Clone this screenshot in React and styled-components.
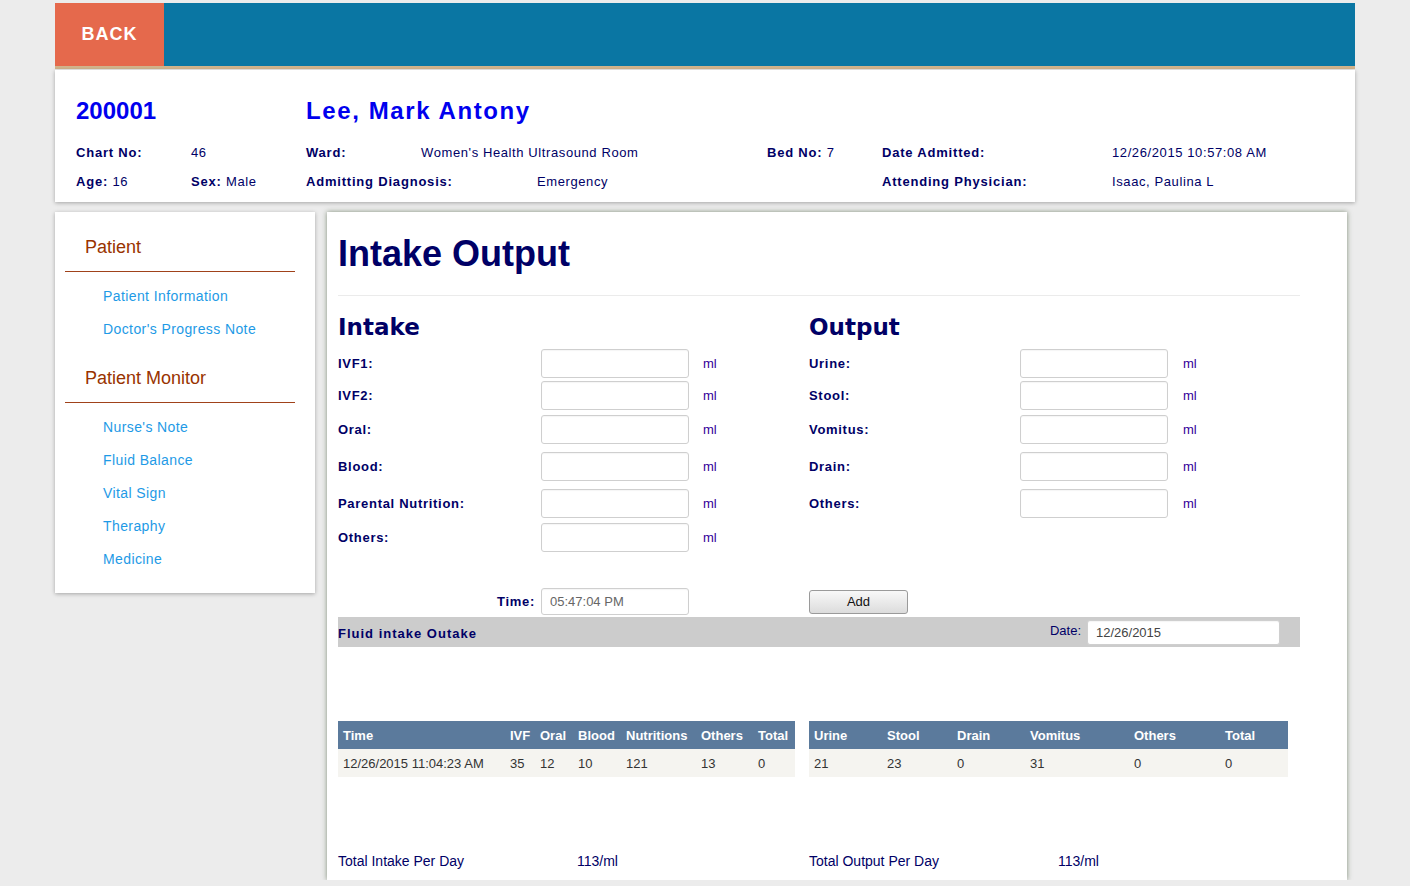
import React from "react";
import styled, { createGlobalStyle } from "styled-components";

const GlobalStyle = createGlobalStyle`
  body {
    margin: 0;
    background: #ececec;
    font-family: "Liberation Sans", Arial, sans-serif;
    font-size: 13px;
    color: #000066;
  }
`;

const Page = styled.div`
  width: 1300px;
  margin: 0 auto;
  padding-top: 3px;
`;

const TopBar = styled.div`
  display: flex;
  height: 63px;
  background: #0a76a3;
  border-bottom: 3px solid #d2b48c;
`;

const BackButton = styled.div`
  width: 109px;
  display: flex;
  align-items: center;
  justify-content: center;
  background: #e5694c;
  color: #fff;
  font-weight: bold;
  font-size: 18px;
  letter-spacing: 1px;
  cursor: pointer;
`;

const InfoCard = styled.div`
  margin-top: 1px;
  height: 132px;
  box-sizing: border-box;
  padding: 27px 0 0 21px;
  background: #fff;
  box-shadow: 0 1px 4px rgba(0, 0, 0, 0.3);
  display: grid;
  grid-template-columns: 115px 115px 115px 116px 230px 115px 230px 1fr;
  grid-template-rows: 41px 29px 29px;
  align-items: center;
`;

const PatientId = styled.div`
  grid-column: ${p => p.$col};
  align-self: start;
  font-size: 24px;
  line-height: 28px;
  font-weight: bold;
  color: #0000ee;
  letter-spacing: ${p => p.$spacing || 0}px;
`;

const InfoLabel = styled.div`
  grid-column: ${p => p.$col};
  font-weight: bold;
  letter-spacing: 0.8px;
  white-space: nowrap;
`;

const InfoValue = styled.span`
  font-weight: normal;
  letter-spacing: 0.6px;
`;

const InfoText = styled.div`
  grid-column: ${p => p.$col};
  letter-spacing: 0.6px;
  white-space: nowrap;
`;

const Body = styled.div`
  display: flex;
  align-items: flex-start;
  gap: 12px;
  margin-top: 10px;
`;

const Sidebar = styled.div`
  width: 260px;
  box-sizing: border-box;
  padding: 24px 20px 24px 10px;
  background: #fff;
  box-shadow: 0 1px 4px rgba(0, 0, 0, 0.3);
`;

const SideHeading = styled.div`
  font-size: 18px;
  line-height: 22px;
  color: #993300;
  padding-left: 20px;
  margin-top: ${p => (p.$first ? 0 : 28)}px;
`;

const SideDivider = styled.div`
  height: 1px;
  background: #a0421a;
  margin: 13px 0 14px;
`;

const SideLink = styled.a`
  display: block;
  padding-left: 38px;
  font-size: 14px;
  line-height: 20px;
  letter-spacing: 0.4px;
  color: #1e9ae6;
  text-decoration: none;
  & + & {
    margin-top: 13px;
  }
`;

const Main = styled.div`
  width: 1020px;
  box-sizing: border-box;
  padding: 22px 47px 10px 11px;
  background: #fff;
  box-shadow: 0 0 5px rgba(70, 90, 60, 0.65);
`;

const Title = styled.h1`
  margin: 0;
  font-size: 36px;
  line-height: 40px;
  font-weight: bold;
  color: #000066;
`;

const Rule = styled.div`
  height: 1px;
  background: #ebebeb;
  margin-top: 21px;
`;

const TwoCols = styled.div`
  display: grid;
  grid-template-columns: 471px 1fr;
  margin-top: ${p => p.$top || 0}px;
`;

const SectionHeading = styled.h2`
  margin: 17px 0 6px;
  font-family: "DejaVu Sans", Verdana, sans-serif;
  font-size: 23px;
  line-height: 28px;
  font-weight: bold;
  color: #000066;
`;

const FieldRow = styled.div`
  display: flex;
  align-items: center;
  height: ${p => p.$h}px;
`;

const FieldLabel = styled.label`
  width: ${p => p.$w}px;
  flex-shrink: 0;
  font-weight: bold;
  letter-spacing: 0.7px;
  color: #000066;
  text-align: ${p => p.$align || "left"};
  padding-right: ${p => p.$pr || 0}px;
  box-sizing: border-box;
`;

const TextBox = styled.input`
  width: ${p => p.$w || 148}px;
  height: ${p => p.$h || 29}px;
  box-sizing: border-box;
  border: 1px solid #cfcfcf;
  border-radius: 3px;
  background: #fff;
  box-shadow: inset 0 1px 1px rgba(0, 0, 0, 0.04);
  padding: 0 8px;
  font-family: inherit;
  font-size: 13px;
  color: ${p => p.$color || "#666"};
  outline: none;
`;

const Unit = styled.span`
  margin-left: ${p => p.$ml}px;
  color: #330099;
`;

const AddButton = styled.button`
  width: 99px;
  height: 24px;
  border: 1px solid #9a9a9a;
  border-radius: 3px;
  background: linear-gradient(#f8f8f8, #dcdcdc);
  font-family: inherit;
  font-size: 13px;
  color: #111;
  cursor: pointer;
`;

const GrayBar = styled.div`
  display: flex;
  align-items: center;
  height: 30px;
  margin-top: 1px;
  padding-right: 20px;
  background: #cccccc;
`;

const BarTitle = styled.div`
  flex: 1;
  font-weight: bold;
  letter-spacing: 1px;
  color: #000066;
  padding-top: 3px;
`;

const DateLabel = styled.span`
  margin-right: 6px;
  margin-top: -3px;
  color: #000066;
`;

const Grid = styled.table`
  width: ${p => p.$w}px;
  border-collapse: collapse;
  table-layout: fixed;
  font-size: 13px;
`;

const HeadCell = styled.th`
  height: 28px;
  padding: 0 0 0 5px;
  background: #5b7a9c;
  color: #fff;
  font-weight: bold;
  text-align: left;
  white-space: nowrap;
`;

const Cell = styled.td`
  height: 28px;
  padding: 0 0 0 5px;
  background: #f5f4f0;
  color: #333;
  white-space: nowrap;
`;

const Totals = styled.div`
  display: grid;
  grid-template-columns: 239px 232px 249px 1fr;
  margin-top: 75px;
  font-size: 14px;
  line-height: 18px;
  color: #000066;
`;

const intakeFields = [
  { label: "IVF1:", h: 33 },
  { label: "IVF2:", h: 30 },
  { label: "Oral:", h: 38 },
  { label: "Blood:", h: 36 },
  { label: "Parental Nutrition:", h: 38 },
  { label: "Others:", h: 31 },
];

const outputFields = [
  { label: "Urine:", h: 33 },
  { label: "Stool:", h: 30 },
  { label: "Vomitus:", h: 38 },
  { label: "Drain:", h: 36 },
  { label: "Others:", h: 38 },
];

const intakeCols = [
  ["Time", 167], ["IVF", 30], ["Oral", 38], ["Blood", 48],
  ["Nutritions", 75], ["Others", 57], ["Total", 42],
];
const intakeRows = [["12/26/2015 11:04:23 AM", "35", "12", "10", "121", "13", "0"]];

const outputCols = [
  ["Urine", 73], ["Stool", 70], ["Drain", 73], ["Vomitus", 104], ["Others", 91], ["Total", 68],
];
const outputRows = [["21", "23", "0", "31", "0", "0"]];

const FieldList = ({ title, fields, labelWidth, unitGap }) => (
  <div>
    <SectionHeading>{title}</SectionHeading>
    {fields.map(f => (
      <FieldRow key={f.label} $h={f.h}>
        <FieldLabel $w={labelWidth}>{f.label}</FieldLabel>
        <TextBox type="text" />
        <Unit $ml={unitGap}>ml</Unit>
      </FieldRow>
    ))}
  </div>
);

const DataTable = ({ cols, rows, width }) => (
  <Grid $w={width}>
    <colgroup>
      {cols.map(([name, w]) => (
        <col key={name} style={{ width: w }} />
      ))}
    </colgroup>
    <thead>
      <tr>
        {cols.map(([name]) => (
          <HeadCell key={name}>{name}</HeadCell>
        ))}
      </tr>
    </thead>
    <tbody>
      {rows.map((r, i) => (
        <tr key={i}>
          {r.map((v, j) => (
            <Cell key={j}>{v}</Cell>
          ))}
        </tr>
      ))}
    </tbody>
  </Grid>
);

export default function App() {
  return (
    <>
      <GlobalStyle />
      <Page>
        <TopBar>
          <BackButton>BACK</BackButton>
        </TopBar>

        <InfoCard>
          <PatientId $col="1 / span 2">200001</PatientId>
          <PatientId $col="3 / span 6" $spacing={1.6}>Lee, Mark Antony</PatientId>

          <InfoLabel $col="1">Chart No:</InfoLabel>
          <InfoText $col="2">46</InfoText>
          <InfoLabel $col="3">Ward:</InfoLabel>
          <InfoText $col="4 / span 2">Women's Health Ultrasound Room</InfoText>
          <InfoLabel $col="6">Bed No: <InfoValue>7</InfoValue></InfoLabel>
          <InfoLabel $col="7">Date Admitted:</InfoLabel>
          <InfoText $col="8">12/26/2015 10:57:08 AM</InfoText>

          <InfoLabel $col="1">Age: <InfoValue>16</InfoValue></InfoLabel>
          <InfoLabel $col="2">Sex: <InfoValue>Male</InfoValue></InfoLabel>
          <InfoLabel $col="3 / span 2">Admitting Diagnosis:</InfoLabel>
          <InfoText $col="5">Emergency</InfoText>
          <InfoLabel $col="7">Attending Physician:</InfoLabel>
          <InfoText $col="8">Isaac, Paulina L</InfoText>
        </InfoCard>

        <Body>
          <Sidebar>
            <SideHeading $first>Patient</SideHeading>
            <SideDivider />
            <SideLink href="#">Patient Information</SideLink>
            <SideLink href="#">Doctor's Progress Note</SideLink>
            <SideHeading>Patient Monitor</SideHeading>
            <SideDivider />
            <SideLink href="#">Nurse's Note</SideLink>
            <SideLink href="#">Fluid Balance</SideLink>
            <SideLink href="#">Vital Sign</SideLink>
            <SideLink href="#">Theraphy</SideLink>
            <SideLink href="#">Medicine</SideLink>
          </Sidebar>

          <Main>
            <Title>Intake Output</Title>
            <Rule />

            <TwoCols>
              <FieldList title="Intake" fields={intakeFields} labelWidth={203} unitGap={14} />
              <FieldList title="Output" fields={outputFields} labelWidth={211} unitGap={15} />
            </TwoCols>

            <TwoCols $top={34}>
              <FieldRow $h={29}>
                <FieldLabel $w={203} $align="right" $pr={6}>Time:</FieldLabel>
                <TextBox type="text" $h={27} defaultValue="05:47:04 PM" />
              </FieldRow>
              <FieldRow $h={29}>
                <AddButton>Add</AddButton>
              </FieldRow>
            </TwoCols>

            <GrayBar>
              <BarTitle>Fluid intake Outake</BarTitle>
              <DateLabel>Date:</DateLabel>
              <TextBox type="text" $w={193} $h={25} $color="#444" defaultValue="12/26/2015" />
            </GrayBar>

            <TwoCols $top={74}>
              <DataTable cols={intakeCols} rows={intakeRows} width={457} />
              <DataTable cols={outputCols} rows={outputRows} width={479} />
            </TwoCols>

            <Totals>
              <span>Total Intake Per Day</span>
              <span>113/ml</span>
              <span>Total Output Per Day</span>
              <span>113/ml</span>
            </Totals>
          </Main>
        </Body>
      </Page>
    </>
  );
}
